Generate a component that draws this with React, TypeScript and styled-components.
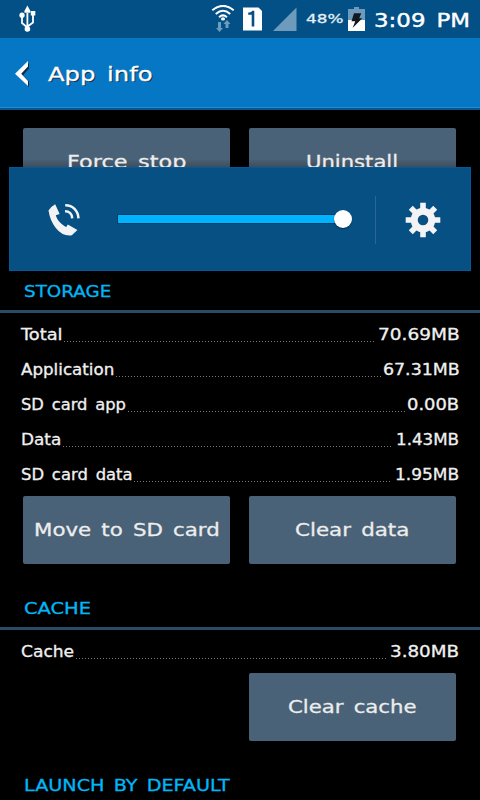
import React, { useLayoutEffect, useRef, useState } from "react";
import styled, { createGlobalStyle } from "styled-components";

const GlobalStyle = createGlobalStyle`
  * { box-sizing: border-box; }
  body { margin: 0; background: #000; font-family: "DejaVu Sans", sans-serif; }
`;

const Screen = styled.div`
  position: relative;
  width: 480px;
  height: 800px;
  overflow: hidden;
  background: #000;
  color: #f0f0f0;
`;

const FitBox = styled.span<{ $w: number }>`
  display: block;
  flex: none;
  width: ${(p) => p.$w}px;
  text-align: left;
  white-space: pre;
  word-spacing: 0.16em;
`;

const FitInner = styled.span`
  display: inline-block;
  transform-origin: 0 50%;
`;

/* Extended lettering: stretches a string horizontally to a set width. */
function Wide({ w, children }: { w: number; children: string }) {
  const ref = useRef<HTMLSpanElement>(null);
  const [scale, setScale] = useState(1);
  useLayoutEffect(() => {
    if (ref.current) setScale((w + 1.5) / ref.current.offsetWidth);
  }, [w, children]);
  return (
    <FitBox $w={w}>
      <FitInner ref={ref} style={{ transform: `translateX(-1px) scaleX(${scale})` }}>
        {children}
      </FitInner>
    </FitBox>
  );
}

const StatusBar = styled.header`
  display: flex;
  align-items: center;
  height: 38px;
  padding: 0 10px 0 18px;
  background: #035086;
  color: #fff;
`;

const StatusIcons = styled.div`
  display: flex;
  align-items: center;
  margin-left: auto;
`;

const Gap = styled.span<{ $w: number }>`
  width: ${(p) => p.$w}px;
`;

const Percent = styled.div`
  margin: 0 5px 0 10px;
  padding-bottom: 1px;
  font-size: 13px;
  color: #e4eff5;
  -webkit-text-stroke: 0.3px #e4eff5;
`;

const Clock = styled.div`
  margin-left: 10px;
  padding-top: 2px;
  font-size: 19px;
  -webkit-text-stroke: 0.4px #fff;
`;

const ActionBar = styled.div`
  display: flex;
  align-items: center;
  gap: 20px;
  height: 72px;
  padding-left: 14px;
  background: linear-gradient(#0677c4 0 69px, #228bd0 69px 70px, #045794 70px);
`;

const Title = styled.h1`
  margin: 0;
  font-size: 20px;
  font-weight: 400;
  color: #fff;
  text-shadow: 1px 1px 0 #123047;
  -webkit-text-stroke: 0.3px #fff;
`;

const ButtonRow = styled.div<{ $top: number }>`
  display: flex;
  justify-content: flex-end;
  gap: 19px;
  margin-top: ${(p) => p.$top}px;
  padding: 0 24px 0 23px;
`;

const Button = styled.button`
  display: flex;
  align-items: center;
  justify-content: center;
  width: 207px;
  height: 68px;
  padding: 0 0 1px;
  border: 0;
  border-radius: 2px;
  background: #496278;
  color: #ededed;
  font: 18.5px "DejaVu Sans", sans-serif;
  -webkit-text-stroke: 0.3px #ededed;
`;

/* A button partly behind the volume panel, darkened by the panel's shade. */
const ShadedButton = styled(Button)`
  background: linear-gradient(#496278 31px, #3f4d5a 39px);
`;

const SectionHeader = styled.h2<{ $top: number }>`
  height: 39px;
  margin: ${(p) => p.$top}px 0 0;
  padding-left: 25px;
  border-bottom: 3px solid #2a4b66;
  font-size: 15.5px;
  font-weight: 400;
  line-height: 37px;
  color: #00b7f5;
  -webkit-text-stroke: 0.3px #00b7f5;
`;

const Rows = styled.div`
  padding-top: 4px;
`;

const Row = styled.div`
  display: flex;
  align-items: center;
  height: 35px;
  padding: 0 21px 0 22px;
  font-size: 15px;
  -webkit-text-stroke: 0.3px #f0f0f0;
`;

const Dots = styled.span<{ $end: number }>`
  flex: 1;
  align-self: flex-end;
  height: 1px;
  margin: 0 ${(p) => p.$end}px 10px 2px;
  background: repeating-linear-gradient(90deg, #777 0 1px, transparent 1px 3px);
`;

const VolumePanel = styled.section`
  position: absolute;
  left: 9px;
  top: 167px;
  width: 462px;
  height: 104px;
  display: flex;
  align-items: center;
  padding: 2px 0 0 38px;
  background: #075084;
  border: 1px solid #06589b;
`;

const Slider = styled.div`
  display: flex;
  align-items: center;
  width: 236px;
  height: 24px;
  margin: 0 22px 2px 35px;
`;

const Track = styled.div`
  flex: none;
  width: 228px;
  height: 10px;
  border: 1px solid #073e63;
  background: #00b3ff;
`;

const Thumb = styled.div`
  flex: none;
  width: 18px;
  height: 18px;
  margin-left: -11px;
  border-radius: 50%;
  background: #fff;
  box-shadow: 0 1px 1px #043047;
`;

const Divider = styled.div`
  width: 1px;
  height: 48px;
  margin-right: 29px;
  background: #286894;
`;

const UsbIcon = () => (
  <svg width="18" height="28" viewBox="0 0 18 28" fill="none" stroke="#fff" strokeWidth="1.8">
    <path d="M9.4 8v18M4 12v6l5.4 4.5M15 10v7.5l-5.4 4" />
    <path d="M9.4 0.4 12.4 6v1.8h-6V6z" fill="#fff" stroke="none" />
    <circle cx="4" cy="10.2" r="2.6" fill="#fff" stroke="none" />
    <path d="M12.8 6h4.5v4.5h-4.5z" fill="#fff" stroke="none" />
    <circle cx="9.4" cy="24" r="2.8" fill="#fff" stroke="none" />
  </svg>
);

const WifiIcon = () => (
  <svg width="24" height="28" viewBox="0 0 24 28" fill="none">
    <path d="M1.3 5.3Q12-3.6 22.7 5.3M4.8 8.9Q12 2.6 19.2 8.9M8.1 12.2Q12 8.6 15.9 12.2" stroke="#fff" strokeWidth="2" />
    <ellipse cx="12" cy="13.9" rx="2" ry="1.6" fill="#fff" />
    <path d="M7 17h3v6h2l-3.5 4L5 23h2zM14.5 23v-4h-2L16 14.9l3.5 4.1h-2v4z" fill="#6e9cbd" />
  </svg>
);

const SimIcon = () => (
  <svg width="20" height="24" viewBox="0 0 20 24">
    <path d="M0 .5h15.5L19 4v19.5H0z" fill="#fff" />
    <path d="M5.2 7.8V5.6c2.3 0 3.5-.6 4-1.8h2.1V19.5H8.7V7.8z" fill="#035086" />
  </svg>
);

const SignalIcon = () => (
  <svg width="24" height="24" viewBox="0 0 24 24">
    <path d="M0 24 23.5.5V24z" fill="#6e9bbc" />
  </svg>
);

const BatteryIcon = () => (
  <svg width="17" height="24" viewBox="0 0 17 24">
    <path d="M6 0h5v2h6v11H0V2h6z" fill="#6e9bbc" />
    <path d="M0 13h17v11H0z" fill="#fff" />
    <path d="M6 6.2h7.3l-2.1 5 3.1.1-9.7 9.8 2.7-6.8H3.5z" fill="#111820" />
  </svg>
);

const BackIcon = () => (
  <svg width="15" height="27" viewBox="0 0 15 27">
    <path d="M14 1 2 13l12 12v-5.5L8 13.2 14 6.5z" fill="#102b40" transform="translate(1 1)" />
    <path d="M14 0 1 12.7 14 25v-5L7.2 12.7 14 5.5z" fill="#fff" />
  </svg>
);

const PhoneIcon = () => (
  <svg width="34" height="34" viewBox="0 0 34 34" fill="none">
    <path
      d="M7.2 1.3 11.6 10.9 7.8 12.3C9 17.3 14 22.2 18.3 24.1L19.8 21.4 29.4 27.1 23.8 32.3Q14.5 33.6 7.8 25 2.2 18.1.5 7.5 3 3.6 7.2 1.3Z"
      fill="#f3f3f5"
    />
    <path d="M17.2 2.2C24.8 2.1 30 7.8 30.5 15.3M17 8.2C21.3 8.2 24.1 11 24.2 15.4" stroke="#f3f3f5" strokeWidth="2.5" />
  </svg>
);

const GearIcon = () => (
  <svg width="36" height="36" viewBox="-18 -18 36 36" fill="#f3f3f5">
    <circle r="8.8" fill="none" stroke="#f3f3f5" strokeWidth="7" />
    {[0, 45, 90, 135].map((a) => (
      <path
        key={a}
        d="M-2.8-17.3h5.6v7h-5.6zM-2.8 10.3h5.6v7h-5.6z"
        transform={`rotate(${a})`}
      />
    ))}
  </svg>
);

type Entry = { name: string; nw: number; value: string; vw: number; gap: number };

const storage: Entry[] = [
  { name: "Total", nw: 40, value: "70.69MB", vw: 80, gap: 4 },
  { name: "Application", nw: 92, value: "67.31MB", vw: 75, gap: 2 },
  { name: "SD card app", nw: 104, value: "0.00B", vw: 51, gap: 3 },
  { name: "Data", nw: 39, value: "1.43MB", vw: 62, gap: 6 },
  { name: "SD card data", nw: 110, value: "1.95MB", vw: 63, gap: 6 },
];
const cache: Entry[] = [{ name: "Cache", nw: 52, value: "3.80MB", vw: 68, gap: 5 }];

const Table = ({ entries }: { entries: Entry[] }) => (
  <Rows>
    {entries.map((e) => (
      <Row key={e.name}>
        <Wide w={e.nw}>{e.name}</Wide>
        <Dots $end={e.gap} />
        <Wide w={e.vw}>{e.value}</Wide>
      </Row>
    ))}
  </Rows>
);

export default function App() {
  return (
    <Screen>
      <GlobalStyle />
      <StatusBar>
        <UsbIcon />
        <StatusIcons>
          <WifiIcon />
          <Gap $w={8} />
          <SimIcon />
          <Gap $w={10} />
          <SignalIcon />
          <Percent><Wide w={36}>48%</Wide></Percent>
          <BatteryIcon />
          <Clock><Wide w={95}>3:09 PM</Wide></Clock>
        </StatusIcons>
      </StatusBar>
      <ActionBar>
        <BackIcon />
        <Title><Wide w={103}>App info</Wide></Title>
      </ActionBar>
      <main>
        <ButtonRow $top={18}>
          <ShadedButton><Wide w={118}>Force stop</Wide></ShadedButton>
          <ShadedButton><Wide w={91}>Uninstall</Wide></ShadedButton>
        </ButtonRow>
        <SectionHeader $top={78}><Wide w={86}>STORAGE</Wide></SectionHeader>
        <Table entries={storage} />
        <ButtonRow $top={4}>
          <Button><Wide w={184}>Move to SD card</Wide></Button>
          <Button><Wide w={113}>Clear data</Wide></Button>
        </ButtonRow>
        <SectionHeader $top={27}><Wide w={65}>CACHE</Wide></SectionHeader>
        <Table entries={cache} />
        <ButtonRow $top={4}>
          <Button><Wide w={127}>Clear cache</Wide></Button>
        </ButtonRow>
        <SectionHeader $top={27}><Wide w={204}>LAUNCH BY DEFAULT</Wide></SectionHeader>
      </main>
      <VolumePanel>
        <PhoneIcon />
        <Slider>
          <Track />
          <Thumb />
        </Slider>
        <Divider />
        <GearIcon />
      </VolumePanel>
    </Screen>
  );
}
